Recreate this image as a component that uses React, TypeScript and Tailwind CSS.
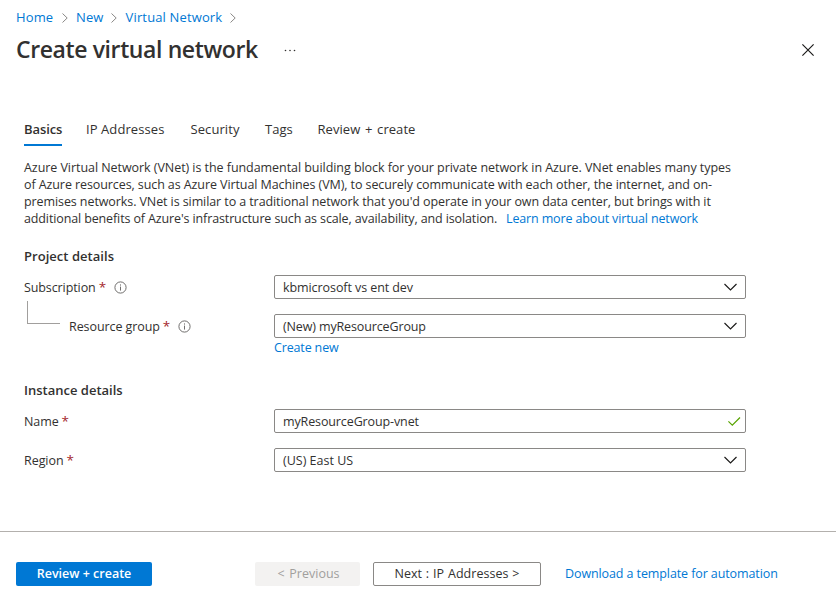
import type { ReactNode } from "react";

function Crumb({ children, className = "" }: { children: ReactNode; className?: string }) {
  return (
    <>
      <a className={"block shrink-0 whitespace-nowrap text-[#0078d4] " + className}>{children}</a>
      <svg className="mx-[8px] h-[10px] w-[6px] shrink-0" viewBox="0 0 6 10" fill="none" stroke="#8a8886">
        <path d="M0.5 0.5 5.2 5 0.5 9.5" />
      </svg>
    </>
  );
}

function Info() {
  return (
    <svg className="mt-px size-[13px] shrink-0" viewBox="0 0 13 13" fill="none" stroke="#605e5c" strokeWidth="0.9">
      <circle cx="6.5" cy="6.5" r="5.6" />
      <path d="M6.5 5.6v4M6.5 3.4v1.2" />
    </svg>
  );
}

function Chevron() {
  return (
    <svg className="h-[8px] w-[14px] shrink-0" viewBox="0 0 14 8" fill="none" stroke="#1b1a19" strokeWidth="1.15">
      <path d="M0.5 1 6.5 7 12.5 1" />
    </svg>
  );
}

function Check() {
  return (
    <svg className="h-[9px] w-[13px] shrink-0" viewBox="0 0 13 9" fill="none" stroke="#57a300" strokeWidth="1.2">
      <path d="M0.4 4.4 4.3 8.1 12 0.5" />
    </svg>
  );
}

function Field({ children, icon, pad = "pr-[7px]", className = "" }: { children: ReactNode; icon: ReactNode; pad?: string; className?: string }) {
  return (
    <div className={"flex h-6 w-[472px] items-center justify-between rounded-[2px] border border-[#8a8886] bg-white pl-[8px] " + pad}>
      <span className={"whitespace-nowrap " + className}>{children}</span>
      {icon}
    </div>
  );
}

function Star() {
  return <span className="ml-[3px] text-[13.5px] leading-[17px] text-[#a4262c]">*</span>;
}

export default function App() {
  return (
    <div className="flex h-[604px] w-[836px] flex-col overflow-hidden bg-white font-['Open_Sans','Noto_Sans',sans-serif] text-[12.5px] leading-[17px] text-[#323130]">
      <nav className="mt-[9px] flex h-[17px] items-center pl-4 text-[13px] tracking-[0.14px]">
        <Crumb className="w-[38px]">Home</Crumb>
        <Crumb className="w-[27px]">New</Crumb>
        <Crumb className="w-[97px] pl-[0.6px]">Virtual Network</Crumb>
      </nav>
      <header className="mt-[8px] flex h-8 items-center pr-[22px] pl-4">
        <h1 className="-mt-[2px] w-[268px] text-[23px] leading-8 font-semibold whitespace-nowrap tracking-[-0.39px]">Create virtual network</h1>
        <svg className="h-[3px] w-[12px]" viewBox="0 0 12 3" fill="#323130">
          <circle cx="1.5" cy="1.5" r="0.8" />
          <circle cx="6" cy="1.5" r="0.8" />
          <circle cx="10.5" cy="1.5" r="0.8" />
        </svg>
        <svg className="ml-auto size-[12px]" viewBox="0 0 12 12" fill="none" stroke="#1b1a19" strokeWidth="1.15">
          <path d="M0.4 0.4 11.6 11.6M11.6 0.4 0.4 11.6" />
        </svg>
      </header>

      <div className="mt-[54px] flex h-[26px] gap-6 pl-6 text-[13px] whitespace-nowrap">
        <div className="h-[26px] w-[38px] border-b-2 border-[#0078d4] pt-px font-semibold tracking-[-0.1px]">Basics</div>
        <div className="w-[80px] pt-px tracking-[0.08px]">IP Addresses</div>
        <div className="w-[51px] pt-px pl-[0.5px] tracking-[0.08px]">Security</div>
        <div className="w-[28px] pt-px">Tags</div>
        <div className="pt-px pl-[0.5px] tracking-[0.06px] [word-spacing:1.2px]">Review + create</div>
      </div>

      <div className="mt-[13px] pl-6 whitespace-nowrap">
        <p className="tracking-[-0.055px]">Azure Virtual Network (VNet) is the fundamental building block for your private network in Azure. VNet enables many types</p>
        <p className="tracking-[-0.09px]">of Azure resources, such as Azure Virtual Machines (VM), to securely communicate with each other, the internet, and on-</p>
        <p className="tracking-[-0.09px]">premises networks. VNet is similar to a traditional network that you'd operate in your own data center, but brings with it</p>
        <p className="flex">
          <span className="w-[482px] tracking-[-0.125px]">additional benefits of Azure's infrastructure such as scale, availability, and isolation.</span>
          <a className="tracking-[-0.14px] text-[#0078d4]">Learn more about virtual network</a>
        </p>
      </div>

      <h2 className="mt-[21px] pl-6 text-[13px] font-semibold tracking-[0.04px]">Project details</h2>
      <div className="mt-[10px] flex h-6 items-center pl-6">
        <div className="flex w-[250px] items-center">
          <label className="w-[90px] tracking-[-0.1px]">Subscription<Star /></label>
          <Info />
        </div>
        <Field icon={<Chevron />} className="tracking-[-0.08px]">kbmicrosoft vs ent dev</Field>
      </div>
      <div className="mt-[15px] flex h-6 items-center pl-6">
        <div className="flex w-[250px] items-center">
          <div className="mr-[9px] mb-[27px] ml-[3px] h-[23px] w-[33px] border-b border-l border-[#a19f9d]" />
          <label className="w-[109px] tracking-[-0.08px]">Resource group<Star /></label>
          <Info />
        </div>
        <Field icon={<Chevron />} className="tracking-[-0.13px]">(New) myResourceGroup</Field>
      </div>
      <a className="mt-px ml-[274px] tracking-[-0.15px] text-[#0078d4]">Create new</a>

      <h2 className="mt-[26px] pl-6 text-[13px] font-semibold">Instance details</h2>
      <div className="mt-[10px] flex h-6 items-center pl-6">
        <label className="w-[250px] tracking-[-0.1px]">Name<Star /></label>
        <Field icon={<Check />} pad="pr-[4px]" className="tracking-[-0.12px]">myResourceGroup-vnet</Field>
      </div>
      <div className="mt-[15px] flex h-6 items-center pl-6">
        <label className="w-[250px] tracking-[-0.05px]">Region<Star /></label>
        <Field icon={<Chevron />}>(US) East US</Field>
      </div>

      <footer className="mt-[59px] flex items-center border-t border-[#b3b0ad] pt-[30px] pl-4 whitespace-nowrap">
        <button className="h-6 w-[136px] rounded-[2px] bg-[#0078d4] pb-px font-semibold text-white">Review + create</button>
        <button className="ml-[103px] h-6 w-[105px] rounded-[2px] bg-[#f3f2f1] pb-px pl-[2px] text-[#a19f9d] [word-spacing:1.5px]">&lt; Previous</button>
        <button className="ml-[13px] h-6 w-[168px] rounded-[2px] border border-[#8a8886] pb-px tracking-[0.03px] [word-spacing:0.6px]">Next : IP Addresses &gt;</button>
        <a className="ml-6 pb-px tracking-[-0.1px] text-[#0078d4]">Download a template for automation</a>
      </footer>
    </div>
  );
}
